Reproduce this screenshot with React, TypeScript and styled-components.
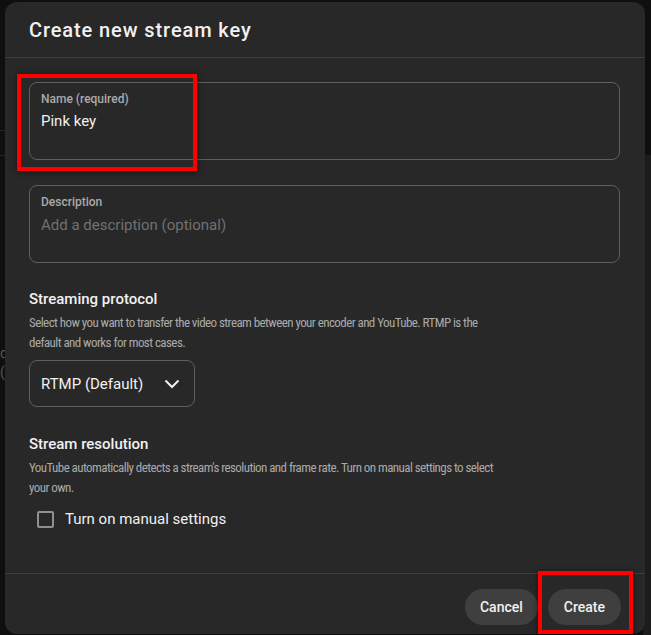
import React from "react";
import styled, { createGlobalStyle } from "styled-components";

const Global = createGlobalStyle`
  html, body { margin: 0; padding: 0; background: #0f0f0f; overflow: hidden; }
  * { box-sizing: border-box; }
  body { font-family: Roboto, "Noto Sans", "Liberation Sans", sans-serif; }
`;

const Page = styled.div`
  position: relative;
  width: 651px;
  height: 635px;
  overflow: hidden;
  background: #0f0f0f;
  padding: 2px 0 0 5px;
`;

const Backdrop = styled.div`
  position: absolute;
  inset: 0;
  pointer-events: none;
`;

const BackLine = styled.div<{ $top: number }>`
  position: absolute;
  left: 0;
  width: 6px;
  top: ${(p) => p.$top}px;
  height: 1px;
  background: #262626;
`;

const BackPanel = styled.div`
  position: absolute;
  right: 0;
  top: 155px;
  bottom: 0;
  width: 8px;
  background: #1c1c1c;
`;

const BackGlyph = styled.span<{ $top: number }>`
  position: absolute;
  left: 0;
  top: ${(p) => p.$top}px;
  font-size: 14px;
  color: #555;
`;

const Dialog = styled.div`
  position: relative;
  width: 640px;
  height: 632px;
  background: #282828;
  border-radius: 12px;
  display: flex;
  flex-direction: column;
  color: #f1f1f1;
`;

const Header = styled.div`
  height: 56px;
  padding: 0 24px;
  display: flex;
  align-items: center;
  border-bottom: 1px solid #3e3e3e;
`;

const Title = styled.h1`
  margin: 0;
  font-size: 20px;
  font-weight: 500;
  letter-spacing: 0.9px;
  color: #f1f1f1;
  padding-top: 1px;
`;

const Body = styled.div`
  flex: 1;
  padding: 24px 25px 0 24px;
  display: flex;
  flex-direction: column;
`;

const Field = styled.div<{ $gap?: number }>`
  height: 78px;
  border: 1px solid #5f5f5f;
  border-radius: 8px;
  padding: 8px 11px 0 11px;
  margin-bottom: ${(p) => p.$gap ?? 0}px;
  display: flex;
  flex-direction: column;
`;

const FieldLabel = styled.div`
  font-size: 12px;
  line-height: 16px;
  color: #aaaaaa;
  font-weight: 500;
`;

const FieldValue = styled.div<{ $placeholder?: boolean }>`
  font-size: 15px;
  line-height: 22px;
  margin-top: ${(p) => (p.$placeholder ? 4 : 3)}px;
  color: ${(p) => (p.$placeholder ? "#717171" : "#f1f1f1")};
`;

const SectionTitle = styled.h2`
  margin: 0;
  font-size: 15px;
  line-height: 22px;
  font-weight: 500;
  color: #f1f1f1;
`;

const SectionText = styled.p`
  margin: 3px 0 0 0;
  font-size: 13px;
  line-height: 20px;
  color: #aaaaaa;
  font-stretch: 85%;
  letter-spacing: -0.57px;
`;

const Section = styled.div<{ $top: number }>`
  margin-top: ${(p) => p.$top}px;
  display: flex;
  flex-direction: column;
  align-items: flex-start;
`;

const Select = styled.div`
  margin-top: 7px;
  width: 166px;
  height: 47px;
  border: 1px solid #5f5f5f;
  border-radius: 8px;
  padding: 0 14px 0 11px;
  display: flex;
  align-items: center;
  justify-content: space-between;
  font-size: 15px;
  color: #f1f1f1;
`;

const CheckRow = styled.label`
  margin-top: 12px;
  margin-left: 8px;
  display: flex;
  align-items: center;
  gap: 11px;
  font-size: 15px;
  color: #f1f1f1;
`;

const Box = styled.span`
  width: 17px;
  height: 17px;
  border: 2px solid #909090;
  border-radius: 2px;
`;

const Footer = styled.div`
  height: 61px;
  border-top: 1px solid #3e3e3e;
  padding: 15px 24px 0 0;
  display: flex;
  justify-content: flex-end;
  align-items: flex-start;
  gap: 10px;
`;

const Spacer = styled.div`
  flex: 1;
`;

const Button = styled.button<{ $pad?: number }>`
  height: 36px;
  padding: 0 ${(p) => p.$pad ?? 16}px;
  border: none;
  border-radius: 18px;
  background: #3f3f3f;
  color: #f1f1f1;
  font-family: Roboto, "Noto Sans", sans-serif;
  font-size: 14px;
  font-weight: 500;
`;

const Highlight = styled.div<{ $l: number; $t: number; $w: number; $h: number }>`
  position: absolute;
  left: ${(p) => p.$l}px;
  top: ${(p) => p.$t}px;
  width: ${(p) => p.$w}px;
  height: ${(p) => p.$h}px;
  border: 4px solid #ff0000;
  box-shadow: 0 1px 6px rgba(0, 0, 0, 0.55);
  pointer-events: none;
`;

const Chevron = () => (
  <svg width="16" height="10" viewBox="0 0 16 10" fill="none">
    <path d="M1.5 1.5 L8 8 L14.5 1.5" stroke="#f1f1f1" strokeWidth="2" />
  </svg>
);

export default function App() {
  return (
    <>
      <Global />
      <Page>
        <Backdrop>
          <BackLine $top={130} />
          <BackLine $top={155} />
          <BackGlyph $top={345}>d</BackGlyph>
          <BackGlyph $top={364}>(</BackGlyph>
          <BackPanel />
        </Backdrop>
        <Dialog>
          <Header>
            <Title>Create new stream key</Title>
          </Header>
          <Body>
            <Field $gap={25}>
              <FieldLabel>Name (required)</FieldLabel>
              <FieldValue>Pink key</FieldValue>
            </Field>
            <Field>
              <FieldLabel>Description</FieldLabel>
              <FieldValue $placeholder>Add a description (optional)</FieldValue>
            </Field>
            <Section $top={25}>
              <SectionTitle>Streaming protocol</SectionTitle>
              <SectionText>
                Select how you want to transfer the video stream between your encoder and YouTube. RTMP is the
                <br />
                default and works for most cases.
              </SectionText>
              <Select>
                <span>RTMP (Default)</span>
                <Chevron />
              </Select>
            </Section>
            <Section $top={26}>
              <SectionTitle>Stream resolution</SectionTitle>
              <SectionText>
                YouTube automatically detects a stream's resolution and frame rate. Turn on manual settings to select
                <br />
                your own.
              </SectionText>
              <CheckRow>
                <Box />
                <span>Turn on manual settings</span>
              </CheckRow>
            </Section>
            <Spacer />
          </Body>
          <Footer>
            <Button $pad={15}>Cancel</Button>
            <Button>Create</Button>
          </Footer>
        </Dialog>
        <Highlight $l={17} $t={74} $w={180} $h={97} />
        <Highlight $l={538} $t={571} $w={95} $h={63} />
      </Page>
    </>
  );
}
